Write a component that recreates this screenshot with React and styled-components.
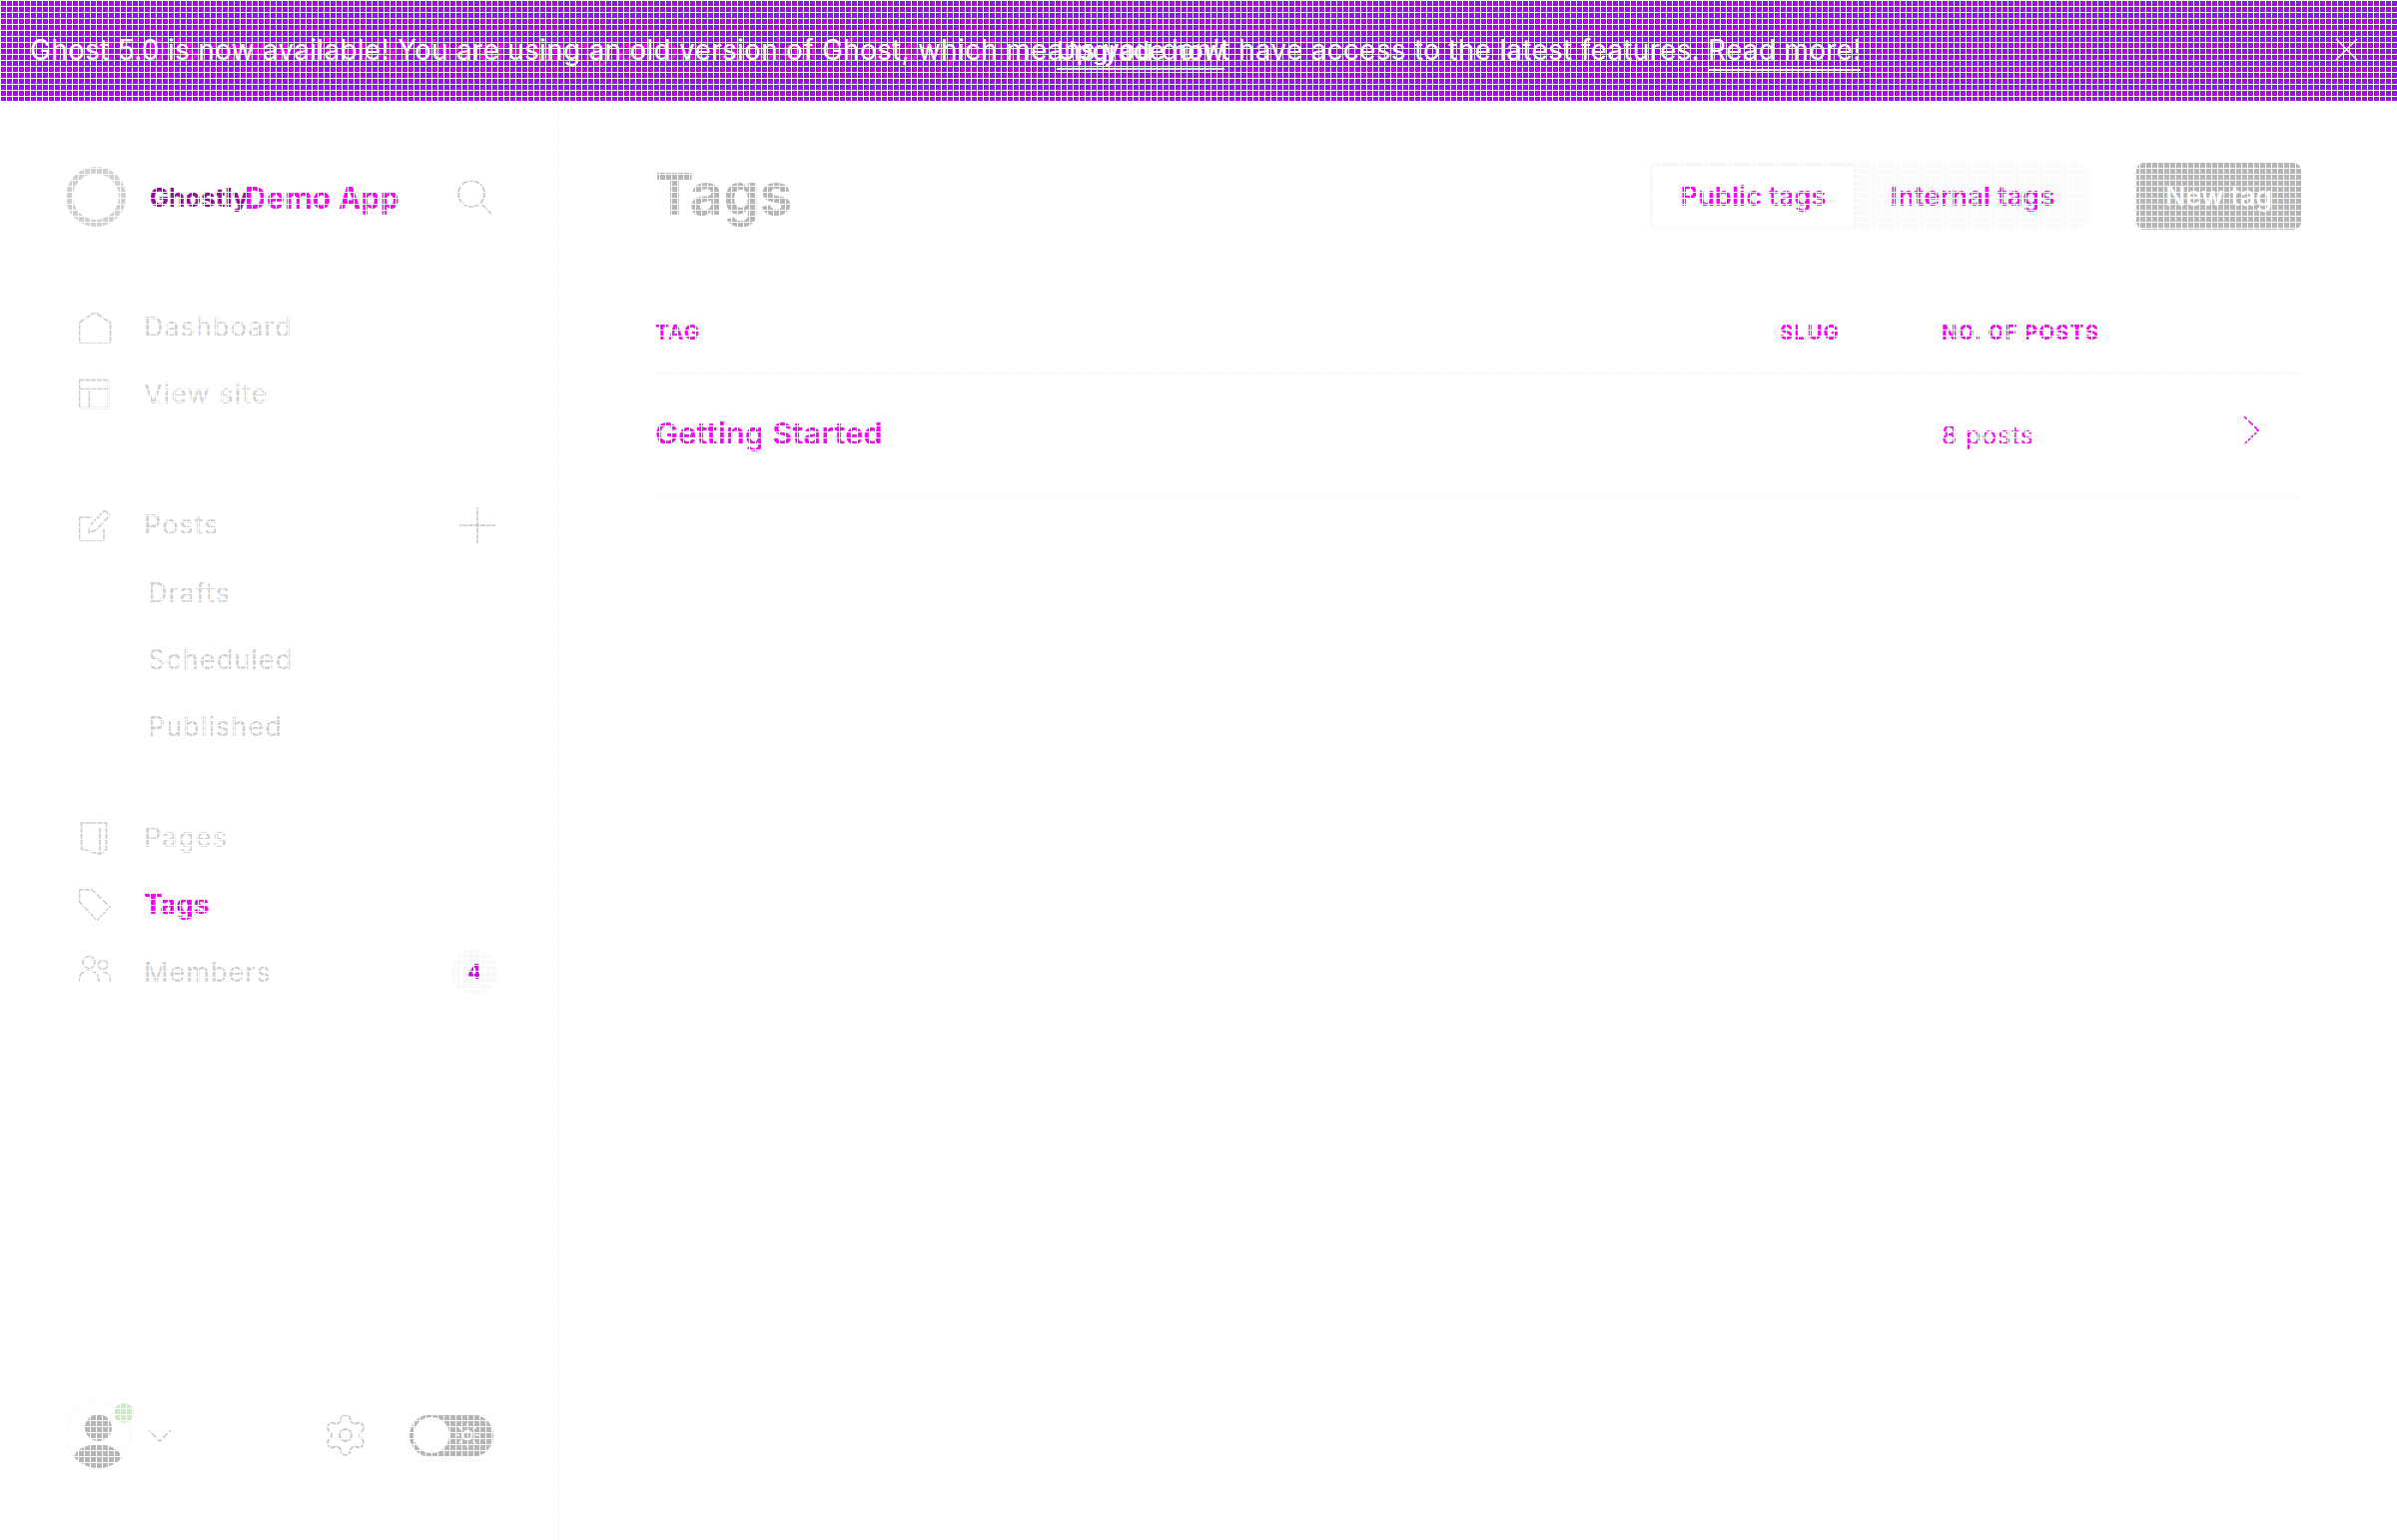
import React from 'react';
import styled, { createGlobalStyle } from 'styled-components';
import { Settings, Sun } from 'lucide-react';

const GlobalStyle = createGlobalStyle`
  html, body {
    margin: 0;
    padding: 0;
    background: #fff;
    font-family: Inter, "Liberation Sans", sans-serif;
  }
  * {
    box-sizing: border-box;
  }
`;

const Page = styled.div`
  position: relative;
  width: 2400px;
  height: 1542px;
  overflow: hidden;
  display: flex;
  flex-direction: column;
`;

// the white 6px lattice that lies over the whole picture
const GridOverlay = styled.div`
  position: absolute;
  inset: 0;
  z-index: 10;
  pointer-events: none;
  background-image: linear-gradient(#fff 1px, transparent 1px),
    linear-gradient(90deg, #fff 1px, transparent 1px);
  background-size: 6px 6px;
`;

const Banner = styled.div`
  flex: 0 0 101px;
  display: flex;
  align-items: center;
  justify-content: space-between;
  padding: 0 39px 2px 30px;
  background: #aa00ff;
`;

const BannerText = styled.div`
  position: relative;
  font-size: 28px;
  line-height: 34px;
  letter-spacing: 0.27px;
  color: #fff;
  white-space: nowrap;
`;

const BannerShadow = styled.span`
  position: absolute;
  left: 0;
  top: 0;
  color: #ff00ff;
  font-weight: 500;
  letter-spacing: 0.85px;
`;

const BannerLine = styled.span`
  position: relative;
`;

const BannerLink = styled.a`
  color: #fff;
  text-decoration: none;
  border-bottom: 2px solid ${(p) => p.$line || '#fff'};
  padding-bottom: 2px;
  font-size: ${(p) => p.$size || 28}px;
  letter-spacing: ${(p) => p.$track || 0.27}px;
`;

const CloseIcon = styled.svg`
  width: 23px;
  height: 23px;
  stroke: #fff;
  stroke-width: 1.4;
  fill: none;
`;

const Main = styled.div`
  flex: 1;
  display: flex;
  min-height: 0;
`;

const Sidebar = styled.aside`
  flex: 0 0 560px;
  display: flex;
  flex-direction: column;
  border-right: 1px solid #f6f6f6;
  padding-top: 66px;
`;

const SideHeader = styled.div`
  height: 60px;
  display: flex;
  align-items: center;
  padding: 0 66px;
  margin-bottom: 67px;
`;

const LogoRing = styled.div`
  flex: 0 0 60px;
  height: 60px;
  border-radius: 50%;
  border: 7px solid #d0d0d0;
  margin-right: 23px;
`;

const SiteName = styled.div`
  position: relative;
  flex: 1;
  font-size: 30px;
  font-weight: 700;
  line-height: 36px;
  color: #ff00ff;
  white-space: nowrap;
  letter-spacing: 0.3px;
  padding: 2px 0 0 96px;
`;

const SiteNameLayer = styled.span`
  position: absolute;
  left: ${(p) => p.$left || 0}px;
  top: 2px;
  font-size: 25.5px;
  color: ${(p) => p.$color};
`;

const SearchIcon = styled.svg`
  flex: 0 0 36px;
  height: 36px;
  stroke: #c4c4c4;
  stroke-width: 1.6;
  fill: none;
`;

const NavGroup = styled.nav`
  display: flex;
  flex-direction: column;
  margin-bottom: ${(p) => p.$gap || 0}px;
`;

const NavRow = styled.div`
  height: 67.2px;
  display: flex;
  align-items: center;
  padding: 0 61px 0 78px;
  font-size: 27px;
  letter-spacing: 1.05px;
  color: #cfcfcf;
`;

const NavIcon = styled.svg`
  flex: 0 0 34px;
  height: 34px;
  margin-right: 32px;
  stroke: #cccccc;
  stroke-width: 1.7;
  fill: none;
`;

const NavLabel = styled.span`
  position: relative;
  flex: 1;
  white-space: nowrap;
`;

const ActiveLabel = styled(NavLabel)`
  color: #a000b4;
  font-weight: 500;
  letter-spacing: 0.6px;
`;

const ActiveLayer = styled.span`
  position: absolute;
  left: 1px;
  top: 0;
  color: #ff00ff;
  font-weight: 600;
`;

const SubRow = styled(NavRow)`
  padding-left: 148px;
`;

const PlusIcon = styled.svg`
  flex: 0 0 36px;
  height: 36px;
  margin-right: 2px;
  stroke: #c4c4c4;
  stroke-width: 1.4;
`;

const Badge = styled.span`
  flex: 0 0 46px;
  height: 46px;
  border-radius: 50%;
  background: #f8f8f8;
  display: flex;
  align-items: center;
  justify-content: center;
  font-size: 20px;
  font-weight: 700;
  letter-spacing: 0;
  color: #d000e8;
`;

const SideFooter = styled.div`
  margin-top: auto;
  height: 66px;
  margin-bottom: 72px;
  padding: 0 65px;
  display: flex;
  align-items: center;
`;

const AvatarWrap = styled.div`
  position: relative;
  flex: 0 0 67px;
  height: 66px;
  margin-right: 16px;
`;

const GreenDot = styled.span`
  position: absolute;
  top: 1px;
  right: -2px;
  width: 20px;
  height: 20px;
  border-radius: 50%;
  background: #c8eec0;
`;

const Chevron = styled.svg`
  flex: 0 0 24px;
  height: 13px;
  stroke: #c8c8c8;
  stroke-width: 1.6;
  fill: none;
`;

const GearWrap = styled.div`
  margin-left: auto;
  margin-right: 40px;
  display: flex;
  color: #c8c8c8;
`;

const ThemeToggle = styled.div`
  width: 84px;
  height: 43px;
  border-radius: 22px;
  background: #b6b6b6;
  padding: 3px 4px;
  display: flex;
  align-items: center;
  justify-content: space-between;
  color: #fff;
`;

const ToggleKnob = styled.span`
  width: 36px;
  height: 36px;
  border-radius: 50%;
  background: #fff;
`;

const ToggleSun = styled.span`
  display: flex;
  margin-right: 9px;
`;

const Content = styled.main`
  flex: 1;
  padding: 62px 96px 0 96px;
`;

const TitleBar = styled.header`
  height: 67px;
  display: flex;
  align-items: center;
  margin-bottom: 61px;
`;

const PageTitle = styled.h1`
  flex: 1;
  margin: 0 0 4px;
  font-size: 58px;
  font-weight: 700;
  line-height: 63px;
  color: #b6b6b6;
`;

const Tabs = styled.div`
  display: flex;
  height: 67px;
  margin-right: 48px;
  background: #fafafa;
  border-radius: 8px;
`;

const Tab = styled.div`
  width: ${(p) => p.$w}px;
  display: flex;
  align-items: center;
  justify-content: center;
  border-radius: 8px;
  font-size: 27.3px;
  font-weight: 600;
  color: #ff00ff;
  background: ${(p) => (p.$active ? '#fff' : 'transparent')};
  border: ${(p) => (p.$active ? '3px solid #f6f6f6' : 'none')};
`;

const NewButton = styled.div`
  width: 165px;
  height: 67px;
  border-radius: 8px;
  background: #b6b6b6;
  color: #fff;
  font-size: 27px;
  font-weight: 500;
  display: flex;
  align-items: center;
  justify-content: center;
`;

const TableRow = styled.div`
  display: grid;
  grid-template-columns: 1126px 162px 1fr auto;
  align-items: center;
  height: ${(p) => p.$h}px;
  padding-bottom: ${(p) => p.$lift || 0}px;
  border-bottom: 1px solid #f5f5f5;
`;

const HeadCell = styled.div`
  font-size: 20.5px;
  font-weight: 700;
  letter-spacing: 1.2px;
  color: #ff00ff;
`;

const TagName = styled.div`
  font-size: 30.5px;
  font-weight: 600;
  letter-spacing: 0.3px;
  color: #ff00ff;
`;

const PostCount = styled.div`
  font-size: 25px;
  letter-spacing: 0.8px;
  color: #ff00ff;
  padding-top: 4px;
`;

const RowChevron = styled.svg`
  width: 16px;
  height: 30px;
  margin: 0 42px 5px 0;
  stroke: #ff00ff;
  stroke-width: 1.6;
  fill: none;
`;

const HouseIcon = () => (
  <NavIcon viewBox="0 0 34 34">
    <path d="M1.5 12 L17 1.5 L32.5 12 V32 H1.5 Z" />
  </NavIcon>
);

const SiteIcon = () => (
  <NavIcon viewBox="0 0 34 34">
    <rect x="1.5" y="2.5" width="29" height="28" />
    <path d="M1.5 11.5 H30.5 M11.5 11.5 V30.5" />
  </NavIcon>
);

const EditIcon = () => (
  <NavIcon viewBox="0 0 34 34">
    <path d="M14 9 H1.5 V32 H26 V21" />
    <path d="M11 24 L12.5 17 L27 2 L32 7 L18 22 Z" />
  </NavIcon>
);

const PageIcon = () => (
  <NavIcon viewBox="0 0 34 34">
    <path d="M3.5 2 H28.5 V29 L22 33 L3.5 28 Z" />
    <path d="M22 6 V33" />
  </NavIcon>
);

const TagIcon = () => (
  <NavIcon viewBox="0 0 34 34">
    <path d="M1.5 2 H14 L32 19 L19 32.5 L1.5 14 Z" />
  </NavIcon>
);

const MembersIcon = () => (
  <NavIcon viewBox="0 0 34 34">
    <circle cx="11" cy="7.5" r="6" />
    <path d="M1 27 C1 19 5 16 11 16 C17 16 21 19 21 27" />
    <circle cx="25" cy="10" r="4.5" />
    <path d="M24 17 C29 17 32.5 20 32.5 27" />
  </NavIcon>
);

const Avatar = () => (
  <svg width="67" height="66" viewBox="0 0 67 66">
    <defs>
      <clipPath id="avatarClip">
        <circle cx="33.5" cy="33" r="33" />
      </clipPath>
    </defs>
    <circle cx="33.5" cy="33" r="32.5" fill="#fff" stroke="#f5f5f5" />
    <g clipPath="url(#avatarClip)" fill="#b6b6b6">
      <circle cx="33.5" cy="25.5" r="13.5" />
      <ellipse cx="33" cy="57" rx="24" ry="15" />
    </g>
  </svg>
);

export default function App() {
  return (
    <Page>
      <GlobalStyle />
      <Banner>
        <BannerText>
          <BannerShadow>
            Ghost 5.0 is now available! You are using an old version of Ghost, which{' '}
            <BannerLink $line="#e4e4e4" $size={26} $track={0.1}>Upgrade now</BannerLink>
          </BannerShadow>
          <BannerLine>
            Ghost 5.0 is now available! You are using an old version of Ghost, which means you don't have
            access to the latest features. <BannerLink>Read more!</BannerLink>
          </BannerLine>
        </BannerText>
        <CloseIcon viewBox="0 0 23 23">
          <path d="M1 1 L22 22 M22 1 L1 22" />
        </CloseIcon>
      </Banner>
      <Main>
        <Sidebar>
          <SideHeader>
            <LogoRing />
            <SiteName>
              <SiteNameLayer $color="#b6b6b6">Ghostly</SiteNameLayer>
              <SiteNameLayer $color="#a000a0" $left={1}>Ghostly</SiteNameLayer>
              Demo App
            </SiteName>
            <SearchIcon viewBox="0 0 36 36">
              <circle cx="15" cy="15" r="13" />
              <path d="M25 25 L35 35" />
            </SearchIcon>
          </SideHeader>
          <NavGroup $gap={64}>
            <NavRow><HouseIcon /><NavLabel>Dashboard</NavLabel></NavRow>
            <NavRow><SiteIcon /><NavLabel>View site</NavLabel></NavRow>
          </NavGroup>
          <NavGroup $gap={44}>
            <NavRow>
              <EditIcon />
              <NavLabel>Posts</NavLabel>
              <PlusIcon viewBox="0 0 36 36"><path d="M18 0 V36 M0 18 H36" /></PlusIcon>
            </NavRow>
            <SubRow>Drafts</SubRow>
            <SubRow>Scheduled</SubRow>
            <SubRow>Published</SubRow>
          </NavGroup>
          <NavGroup>
            <NavRow><PageIcon /><NavLabel>Pages</NavLabel></NavRow>
            <NavRow>
              <TagIcon />
              <ActiveLabel>
                <ActiveLayer>Tags</ActiveLayer>
                Tags
              </ActiveLabel>
            </NavRow>
            <NavRow>
              <MembersIcon />
              <NavLabel>Members</NavLabel>
              <Badge>4</Badge>
            </NavRow>
          </NavGroup>
          <SideFooter>
            <AvatarWrap>
              <Avatar />
              <GreenDot />
            </AvatarWrap>
            <Chevron viewBox="0 0 24 13"><path d="M1 1 L12 12 L23 1" /></Chevron>
            <GearWrap><Settings size={48} strokeWidth={0.9} /></GearWrap>
            <ThemeToggle>
              <ToggleKnob />
              <ToggleSun><Sun size={26} strokeWidth={1.6} /></ToggleSun>
            </ThemeToggle>
          </SideFooter>
        </Sidebar>
        <Content>
          <TitleBar>
            <PageTitle>Tags</PageTitle>
            <Tabs>
              <Tab $w={207} $active>Public tags</Tab>
              <Tab $w={232}>Internal tags</Tab>
            </Tabs>
            <NewButton>New tag</NewButton>
          </TitleBar>
          <TableRow $h={83}>
            <HeadCell>TAG</HeadCell>
            <HeadCell>SLUG</HeadCell>
            <HeadCell>NO. OF POSTS</HeadCell>
          </TableRow>
          <TableRow $h={124} $lift={4}>
            <TagName>Getting Started</TagName>
            <div />
            <PostCount>8 posts</PostCount>
            <RowChevron viewBox="0 0 16 30"><path d="M1 1 L15 15 L1 29" /></RowChevron>
          </TableRow>
        </Content>
      </Main>
      <GridOverlay />
    </Page>
  );
}
